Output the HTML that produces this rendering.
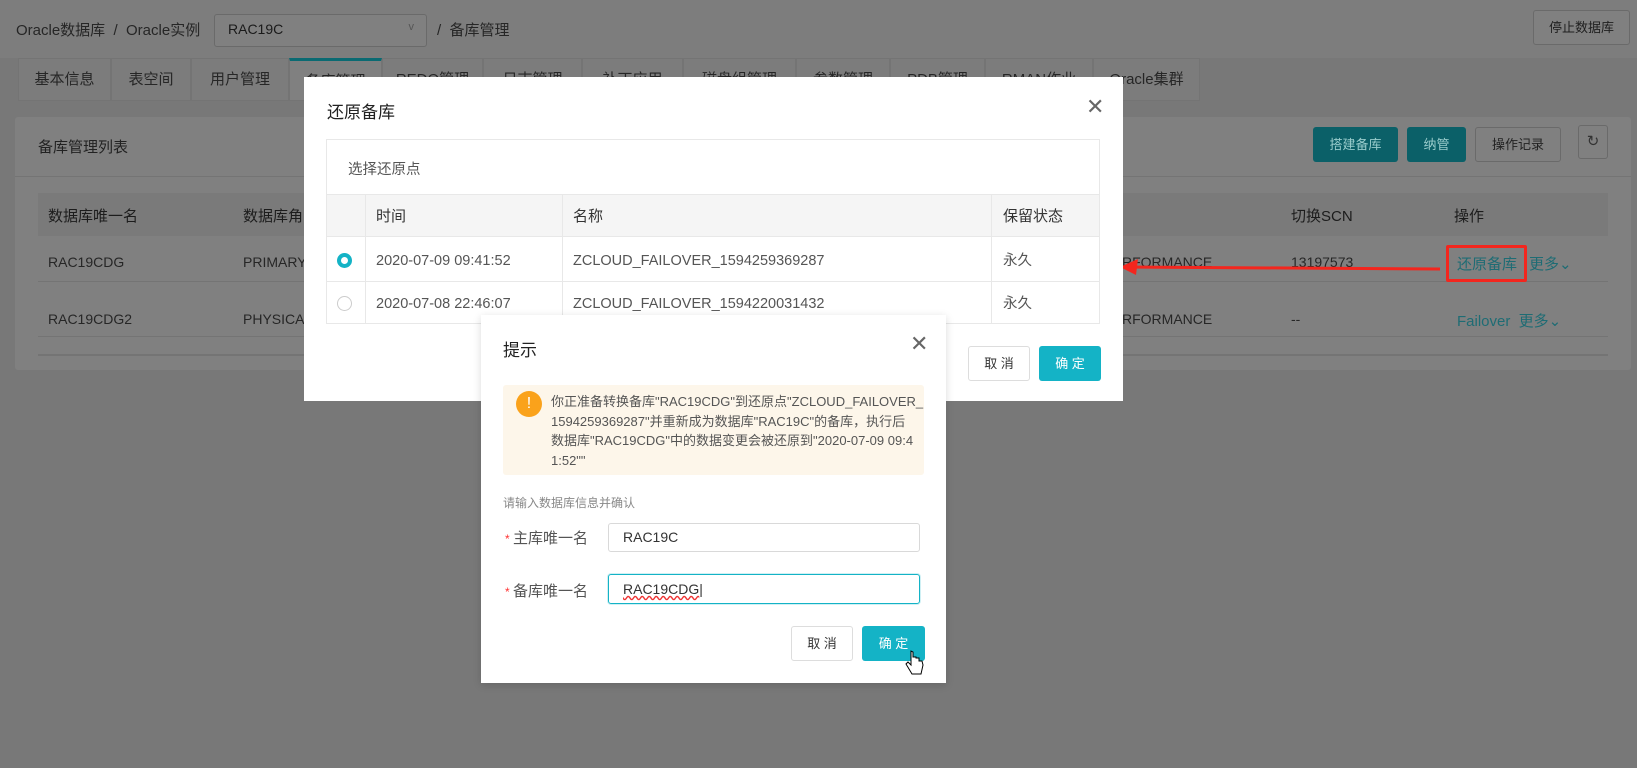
<!DOCTYPE html>
<html><head><meta charset="utf-8"><style>
*{margin:0;padding:0;box-sizing:border-box}
body{width:1637px;height:768px;position:relative;overflow:hidden;background:#787878;font-family:"Liberation Sans","Noto Sans CJK SC",sans-serif;font-size:14px;color:#222}
.a{position:absolute;white-space:nowrap}
.tab{position:absolute;top:58px;height:43px;border:1px solid #747474;background:#7c7c7c;color:#262626;font-size:15px;line-height:41px;text-align:center}
.btn{position:absolute;border-radius:3px;font-size:13px;text-align:center}
.m{background:#fff;position:absolute}
.c{position:absolute;color:#555;font-size:14.5px;line-height:20px;white-space:nowrap}
</style></head><body>
<div class="a" style="left:0;top:0;width:1637px;height:58px;background:#7d7d7d"></div>
<div class="a" style="left:16px;top:19px;font-size:15px;color:#262626">Oracle数据库 &nbsp;/ &nbsp;Oracle实例</div>
<div class="a" style="left:214px;top:14px;width:213px;height:33px;border:1px solid #6a6a6a;border-radius:3px;background:#808080;padding:6px 13px;font-size:14px;color:#1a1a1a">RAC19C<span style="position:absolute;right:12px;top:6px;color:#555;font-size:11px">v</span></div>
<div class="a" style="left:437px;top:19px;font-size:15px;color:#262626">/ &nbsp;备库管理</div>
<div class="btn" style="left:1533px;top:10px;width:97px;height:35px;border:1px solid #6a6a6a;background:#808080;line-height:33px;color:#1f1f1f">停止数据库</div>
<div class="tab" style="left:18px;width:93px">基本信息</div>
<div class="tab" style="left:111px;width:80px">表空间</div>
<div class="tab" style="left:191px;width:98px">用户管理</div>
<div class="tab" style="left:289px;width:93px;border-top:3px solid #0a6a72;background:#808080">备库管理</div>
<div class="tab" style="left:382px;width:101px">REDO管理</div>
<div class="tab" style="left:483px;width:99px">日志管理</div>
<div class="tab" style="left:582px;width:101px">补丁应用</div>
<div class="tab" style="left:683px;width:113px">磁盘组管理</div>
<div class="tab" style="left:796px;width:94px">参数管理</div>
<div class="tab" style="left:890px;width:95px">PDB管理</div>
<div class="tab" style="left:985px;width:108px">RMAN作业</div>
<div class="tab" style="left:1093px;width:107px">Oracle集群</div>
<div class="a" style="left:15px;top:117px;width:1616px;height:253px;background:#808080;border-radius:3px"></div>
<div class="a" style="left:15px;top:176px;width:1616px;height:1px;background:#747474"></div>
<div class="a" style="left:38px;top:136px;font-size:15px;color:#222">备库管理列表</div>
<div class="btn" style="left:1313px;top:127px;width:85px;height:35px;background:#0b6068;color:#9cc;line-height:35px">搭建备库</div>
<div class="btn" style="left:1407px;top:127px;width:59px;height:35px;background:#0b6068;color:#9cc;line-height:35px">纳管</div>
<div class="btn" style="left:1475px;top:127px;width:86px;height:35px;border:1px solid #6a6a6a;line-height:33px;color:#222">操作记录</div>
<div class="btn" style="left:1578px;top:125px;width:30px;height:34px;border:1px solid #6a6a6a;line-height:32px;color:#333;font-size:15px">↻</div>
<div class="a" style="left:38px;top:193px;width:1570px;height:43px;background:#7a7a7a"></div>
<div class="a" style="left:38px;top:281px;width:1570px;height:1px;background:#747474"></div>
<div class="a" style="left:38px;top:336px;width:1570px;height:1px;background:#747474"></div>
<div class="a" style="left:38px;top:354px;width:1570px;height:2px;background:#747474"></div>
<div class="a" style="left:48px;top:205px;font-size:15px;color:#1c1c1c">数据库唯一名</div>
<div class="a" style="left:243px;top:205px;font-size:15px;color:#1c1c1c">数据库角</div>
<div class="a" style="left:1291px;top:205px;font-size:15px;color:#1c1c1c">切换SCN</div>
<div class="a" style="left:1454px;top:205px;font-size:15px;color:#1c1c1c">操作</div>
<div class="a" style="left:48px;top:254px;color:#262626">RAC19CDG</div>
<div class="a" style="left:243px;top:254px;color:#262626">PRIMARY</div>
<div class="a" style="left:1122px;top:254px;color:#262626">RFORMANCE</div>
<div class="a" style="left:1291px;top:254px;color:#262626">13197573</div>
<div class="a" style="left:1457px;top:253px;font-size:15px;color:#1e6c74">还原备库</div>
<div class="a" style="left:1529px;top:253px;font-size:15px;color:#1e6c74">更多⌄</div>
<div class="a" style="left:48px;top:311px;color:#262626">RAC19CDG2</div>
<div class="a" style="left:243px;top:311px;color:#262626">PHYSICA</div>
<div class="a" style="left:1122px;top:311px;color:#262626">RFORMANCE</div>
<div class="a" style="left:1291px;top:311px;color:#262626">--</div>
<div class="a" style="left:1457px;top:310px;font-size:15px;color:#1e6c74">Failover &nbsp;更多⌄</div>
<div class="a" style="left:1446px;top:245px;width:81px;height:37px;border:3px solid #f3261e;border-radius:2px"></div>
<svg class="a" style="left:1120px;top:255px" width="330" height="25"><line x1="1" y1="12" x2="320" y2="14" stroke="#f3261e" stroke-width="3"/><polygon points="0,12 18,4 16,20" fill="#f3261e"/></svg>

<div class="m" style="left:304px;top:77px;width:819px;height:324px"></div>
<div class="a" style="left:327px;top:98px;font-size:17px;color:#222">还原备库</div>
<div class="a" style="left:1086px;top:94px;font-size:22px;color:#666">✕</div>
<div class="a" style="left:326px;top:139px;width:774px;height:185px;border:1px solid #e8e8e8"></div>
<div class="c" style="left:348px;top:160px">选择还原点</div>
<div class="a" style="left:327px;top:194px;width:772px;height:43px;background:#f5f5f5;border-top:1px solid #e8e8e8;border-bottom:1px solid #e8e8e8"></div>
<div class="a" style="left:327px;top:281px;width:772px;height:1px;background:#e8e8e8"></div>
<div class="a" style="left:365px;top:194px;width:1px;height:130px;background:#e8e8e8"></div>
<div class="a" style="left:562px;top:194px;width:1px;height:130px;background:#e8e8e8"></div>
<div class="a" style="left:991px;top:194px;width:1px;height:130px;background:#e8e8e8"></div>
<div class="c" style="left:376px;top:207px;font-size:15px;color:#333">时间</div>
<div class="c" style="left:573px;top:207px;font-size:15px;color:#333">名称</div>
<div class="c" style="left:1003px;top:207px;font-size:15px;color:#333">保留状态</div>
<div class="a" style="left:337px;top:253px;width:15px;height:15px;border-radius:50%;border:4px solid #14b3c6;background:#fff"></div>
<div class="a" style="left:337px;top:296px;width:15px;height:15px;border-radius:50%;border:1px solid #ccc"></div>
<div class="c" style="left:376px;top:251px">2020-07-09 09:41:52</div>
<div class="c" style="left:573px;top:251px">ZCLOUD_FAILOVER_1594259369287</div>
<div class="c" style="left:1003px;top:251px">永久</div>
<div class="c" style="left:376px;top:294px">2020-07-08 22:46:07</div>
<div class="c" style="left:573px;top:294px">ZCLOUD_FAILOVER_1594220031432</div>
<div class="c" style="left:1003px;top:294px">永久</div>
<div class="btn" style="left:968px;top:346px;width:62px;height:35px;border:1px solid #ddd;line-height:33px;color:#333;background:#fff">取 消</div>
<div class="btn" style="left:1039px;top:346px;width:62px;height:35px;background:#14b3c6;line-height:35px;color:#fff">确 定</div>

<div class="m" style="left:481px;top:315px;width:465px;height:368px;box-shadow:0 2px 8px rgba(0,0,0,.15)"></div>
<div class="a" style="left:503px;top:336px;font-size:17px;color:#222">提示</div>
<div class="a" style="left:910px;top:331px;font-size:22px;color:#666">✕</div>
<div class="a" style="left:503px;top:385px;width:421px;height:90px;background:#fdf6ea;border-radius:3px"></div>
<div class="a" style="left:516px;top:391px;width:26px;height:26px;border-radius:50%;background:#faa21b;color:#fff;text-align:center;line-height:26px;font-size:16px">!</div>
<div class="a" style="left:551px;top:392px;font-size:13px;line-height:19.5px;color:#555">你正准备转换备库"RAC19CDG"到还原点"ZCLOUD_FAILOVER_<br>1594259369287"并重新成为数据库"RAC19C"的备库，执行后<br>数据库"RAC19CDG"中的数据变更会被还原到"2020-07-09 09:4<br>1:52""</div>
<div class="a" style="left:503px;top:494px;font-size:12px;color:#888">请输入数据库信息并确认</div>
<div class="a" style="left:505px;top:527px;font-size:15px;color:#555"><span style="color:#f33;font-size:12px">* </span>主库唯一名</div>
<div class="a" style="left:608px;top:523px;width:312px;height:29px;border:1px solid #d9d9d9;border-radius:3px;padding:5px 14px;font-size:14px;color:#333">RAC19C</div>
<div class="a" style="left:505px;top:580px;font-size:15px;color:#555"><span style="color:#f33;font-size:12px">* </span>备库唯一名</div>
<div class="a" style="left:608px;top:574px;width:312px;height:30px;border:1px solid #14b3c6;border-radius:3px;padding:6px 14px;font-size:14px;color:#333;box-shadow:0 0 0 1px rgba(20,179,198,.2)"><span style="text-decoration:underline wavy #e33">RAC19CDG</span>|</div>
<div class="btn" style="left:791px;top:626px;width:62px;height:35px;border:1px solid #ddd;line-height:33px;color:#333;background:#fff">取 消</div>
<div class="btn" style="left:862px;top:626px;width:63px;height:35px;background:#14b3c6;line-height:35px;color:#fff">确 定</div>
<svg class="a" style="left:905px;top:649px" width="20" height="30"><path d="M6 2v14l-3-3-2 2 6 10h9l2-9-1-4-3 0v-3h-3v-1h-3V3z" fill="#fff" stroke="#000" stroke-width="1"/></svg>
</body></html>
